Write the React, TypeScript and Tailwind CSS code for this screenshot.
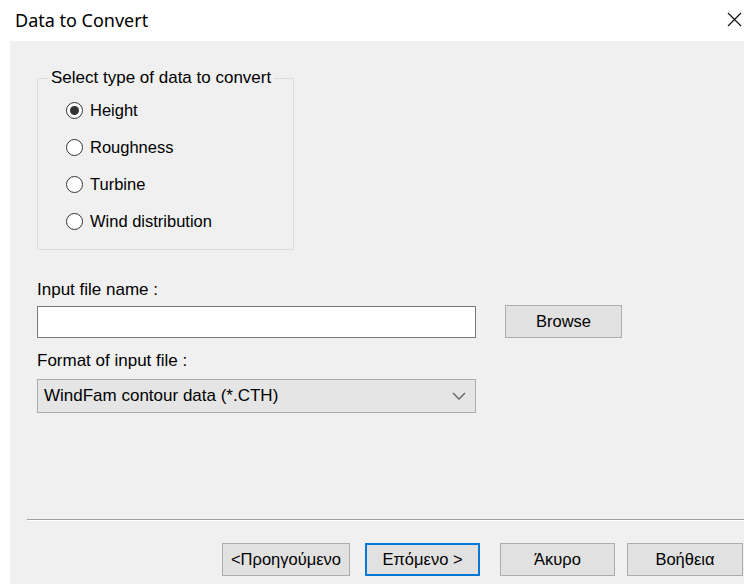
import React from 'react';

const dataTypes = ['Height', 'Roughness', 'Turbine', 'Wind distribution'];

const Radio: React.FC<{ label: string; checked?: boolean }> = ({ label, checked }) => (
  <label className="flex items-center h-[20px] gap-[7px] text-[16.5px]">
    <span className="shrink-0 w-[17px] h-[17px] rounded-full border-[1.5px] border-[#333333] bg-white flex items-center justify-center">
      {checked && <span className="w-[9px] h-[9px] rounded-full bg-[#333333]" />}
    </span>
    <span>{label}</span>
  </label>
);

const WinButton: React.FC<{ children: React.ReactNode; w: string; focused?: boolean }> = ({ children, w, focused }) => (
  <button
    className={
      focused
        ? `${w} h-[33px] bg-[#e1e1e1] border-2 border-[#0078d7] text-[16.5px] text-black`
        : `${w} h-[33px] bg-[#e1e1e1] border border-[#adadad] text-[16.5px] text-black`
    }
  >
    {children}
  </button>
);

export default function App() {
  return (
    <div className="w-[744px] h-[584px] bg-white flex flex-col font-['Liberation_Sans',Arial,sans-serif] text-[17px] text-black overflow-hidden">
      {/* title bar */}
      <div className="h-[41px] flex items-center justify-between pl-[15px] pr-[2px] shrink-0">
        <span className="font-['Noto_Sans',sans-serif] text-[18px]">Data to Convert</span>
        <svg width="15" height="15" viewBox="0 0 15 15" className="mb-[3px]">
          <path d="M1 1 L14 14 M14 1 L1 14" stroke="#111" strokeWidth="1.2" fill="none" />
        </svg>
      </div>

      {/* dialog body */}
      <div className="flex-1 ml-[10px] bg-[#f0f0f0] flex flex-col pl-[17px]">
        <div className="ml-[10px] flex flex-col">
          <fieldset className="mt-[28px] w-[257px] h-[181px] border border-[#dcdcdc] pt-[13px]">
            <legend className="ml-[10px] px-[3px] leading-[18px]">Select type of data to convert</legend>
            <div className="flex flex-col gap-[17px] pl-[28px]">
              {dataTypes.map((t, i) => (
                <Radio key={t} label={t} checked={i === 0} />
              ))}
            </div>
          </fieldset>

          <div className="mt-[31px] leading-[18px]">Input file name :</div>
          <div className="mt-[6px] flex items-center">
            <div className="w-[439px] h-[32px] bg-white border border-[#7a7a7a]" />
            <WinButton w="ml-[29px] w-[117px] h-[30px]">Browse</WinButton>
          </div>

          <div className="mt-[14px] leading-[18px]">Format of input file :</div>
          <div className="mt-[9px] w-[439px] h-[34px] bg-[#e5e5e5] border border-[#adadad] flex items-center justify-between pl-[6px] pr-[9px]">
            <span>WindFam contour data (*.CTH)</span>
            <svg width="14" height="8" viewBox="0 0 14 8">
              <path d="M1 1 L7 7 L13 1" stroke="#606060" strokeWidth="1.3" fill="none" />
            </svg>
          </div>
        </div>

        <div className="mt-auto border-t border-[#a0a0a0] border-b border-b-white" />

        <div className="mt-[22px] mb-[8px] flex justify-end items-center">
          <WinButton w="w-[128px]">&lt;Προηγούμενο</WinButton>
          <div className="ml-[15px]">
            <WinButton w="w-[115px]" focused>
              Επόμενο &gt;
            </WinButton>
          </div>
          <div className="ml-[20px]">
            <WinButton w="w-[115px]">Άκυρο</WinButton>
          </div>
          <div className="ml-[12px] mr-[1px]">
            <WinButton w="w-[116px]">Βοήθεια</WinButton>
          </div>
        </div>
      </div>
    </div>
  );
}
